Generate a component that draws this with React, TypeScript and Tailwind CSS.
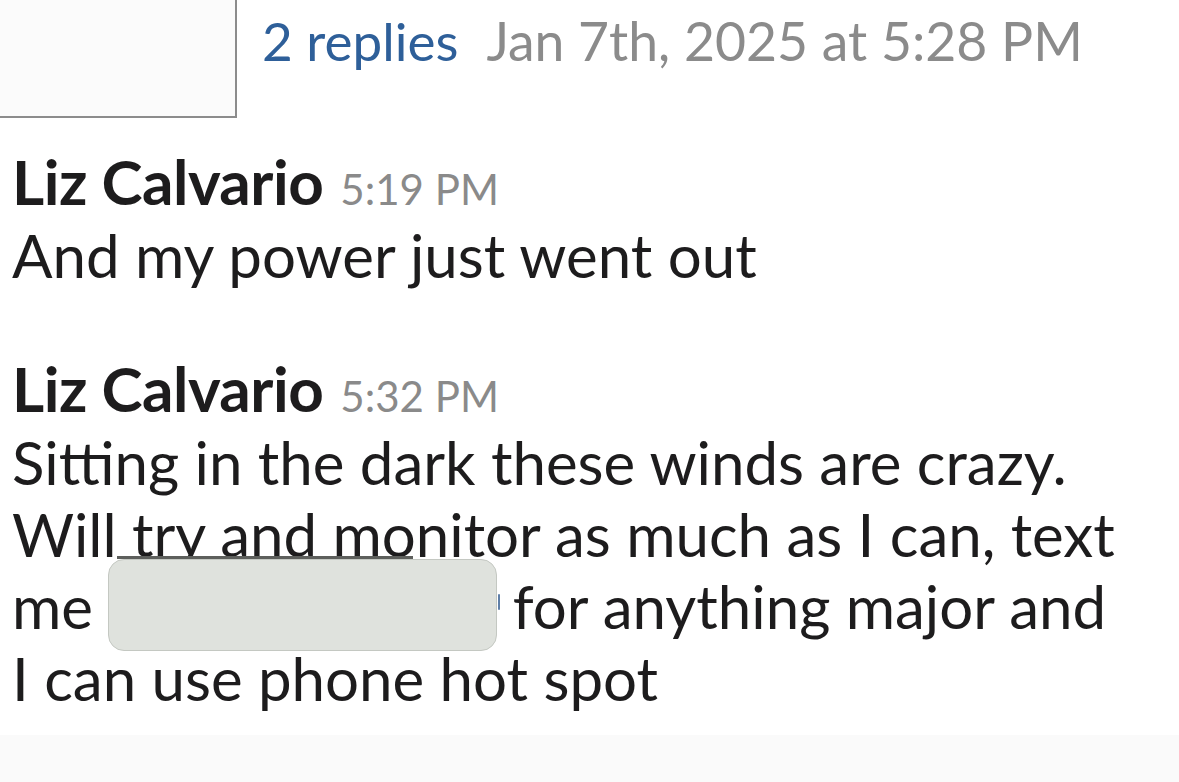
const font = { fontFamily: 'Lato, "Noto Sans", sans-serif' };

const Header = ({ name, time }: { name: string; time: string }) => (
  <div className="flex items-baseline gap-[17px] leading-none">
    <span className="text-[62px] font-bold text-[#1d1c1d] tracking-[-0.5px]">{name}</span>
    <span className="text-[42px] text-[#8a8a8a]">{time}</span>
  </div>
);

export default function App() {
  return (
    <div className="w-[1179px] h-[782px] bg-white overflow-hidden flex flex-col" style={font}>
      <div className="flex items-start">
        <div className="w-[237px] h-[118px] bg-[#fbfbfb] border-r-2 border-b-2 border-[#8c8c8c] shrink-0" />
        <div className="flex items-baseline gap-[28px] pl-[25px] pt-[14px] text-[53px] leading-none">
          <span className="text-[#2e5f99]">2 replies</span>
          <span className="text-[#8b8b8b] text-[53.5px]">Jan 7th, 2025 at 5:28 PM</span>
        </div>
      </div>

      <div className="pl-[12px] pt-[32px] text-[#1d1c1d]">
        <Header name="Liz Calvario" time="5:19 PM" />
        <p className="text-[60px] leading-[72px] mt-[7px]">And my power just went out</p>
      </div>

      <div className="pl-[12px] pt-[66px] text-[#1d1c1d]">
        <Header name="Liz Calvario" time="5:32 PM" />
        <p className="text-[60px] leading-[72px] mt-[7px] w-[1150px]">
          Sitting in the dark these winds are crazy.
          <br />
          Will try and monitor as much as I can, text
          <br />
          me{' '}
          <span className="relative inline-block -my-[30px] align-[8px] w-[389px] h-[92px] rounded-[16px] bg-[#dfe2dd] border border-[#c4c8c2]">
            <span className="absolute left-[8px] w-[296px] top-[-4px] h-[3px] bg-[#5d5f5c]" />
            <span className="absolute right-[-4px] top-[34px] w-[2px] h-[16px] rounded-full bg-[#5f7fa8]" />
          </span>{' '}
          for anything major and
          <br />I can use phone hot spot
        </p>
      </div>

      <div className="mt-auto h-[47px] bg-[#fafafa]" />
    </div>
  );
}
